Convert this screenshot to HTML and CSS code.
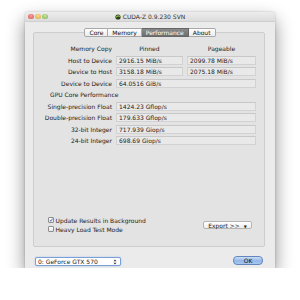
FILE: index.html
```html
<!DOCTYPE html>
<html lang="en">
<head>
    <meta charset="UTF-8">
    <title>CUDA-Z 0.9.230 SVN</title>
    <link rel="stylesheet" href="styles.css">
</head>
<body>
    <div class="window">
        <div class="titlebar">
            <div class="lights">
                <span class="light red"></span>
                <span class="light yellow"></span>
                <span class="light green"></span>
            </div>
            <div class="title">
                <svg class="app-icon" width="6" height="6" viewBox="0 0 6 6">
                    <circle cx="3" cy="3" r="2.6" fill="#2b3a1a"/>
                    <path d="M1.2 3.4 Q3 0.8 4.9 2.6" stroke="#8cc63f" stroke-width="1.1" fill="none"/>
                </svg>
                <span>CUDA-Z 0.9.230 SVN</span>
            </div>
        </div>

        <div class="content">
            <div class="tabs">
                <span class="tab first">Core</span>
                <span class="tab">Memory</span>
                <span class="tab active">Performance</span>
                <span class="tab last">About</span>
            </div>

            <div class="panel">
                <div class="results">
                    <span class="label">Memory Copy</span>
                    <span class="head">Pinned</span>
                    <span class="head">Pageable</span>

                    <span class="label">Host to Device</span>
                    <span class="value">2916.15 MiB/s</span>
                    <span class="value">2099.78 MiB/s</span>

                    <span class="label">Device to Host</span>
                    <span class="value">3158.18 MiB/s</span>
                    <span class="value">2075.18 MiB/s</span>

                    <span class="label">Device to Device</span>
                    <span class="value wide">64.0516 GiB/s</span>

                    <span class="section">GPU Core Performance</span>

                    <span class="label">Single-precision Float</span>
                    <span class="value wide">1424.23 Gflop/s</span>

                    <span class="label">Double-precision Float</span>
                    <span class="value wide">179.633 Gflop/s</span>

                    <span class="label">32-bit Integer</span>
                    <span class="value wide">717.939 Giop/s</span>

                    <span class="label">24-bit Integer</span>
                    <span class="value wide">698.69 Giop/s</span>
                </div>

                <div class="options">
                    <div class="checks">
                        <label class="check"><span class="box checked">&#10003;</span>Update Results in Background</label>
                        <label class="check"><span class="box"></span>Heavy Load Test Mode</label>
                    </div>
                    <button class="export">Export &gt;&gt; <span class="arrow">&#9660;</span></button>
                </div>
            </div>

            <div class="footer">
                <div class="device-select">
                    <span>0: GeForce GTX 570</span>
                    <svg width="4" height="6" viewBox="0 0 4 6">
                        <path d="M0.5 2.3 L2 0.6 L3.5 2.3 Z M0.5 3.7 L2 5.4 L3.5 3.7 Z" fill="#333"/>
                    </svg>
                </div>
                <button class="ok">OK</button>
            </div>
        </div>
    </div>
</body>
</html>
```

FILE: styles.css
```css
* {
    box-sizing: border-box;
    margin: 0;
    padding: 0;
}

body {
    background-color: #ffffff;
    font-family: 'DejaVu Sans', 'Liberation Sans', sans-serif;
    font-size: 6px;
    color: #222;
}

.window {
    margin: 12px 0 0 25px;
    width: 250px;
    height: 256px;
    display: flex;
    flex-direction: column;
    background-color: #ebebeb;
    border-radius: 3px 3px 0 0;
    box-shadow: 0 8px 18px rgba(0, 0, 0, 0.45), 0 0 2px rgba(0, 0, 0, 0.25);
}

.titlebar {
    height: 10px;
    display: flex;
    align-items: center;
    position: relative;
    background: linear-gradient(#ededed, #dcdcdc);
    border-radius: 3px 3px 0 0;
    border-bottom: 1px solid #cfcfcf;
}

.lights {
    display: flex;
    gap: 1.5px;
    padding-left: 3px;
}

.light {
    width: 5.5px;
    height: 5.5px;
    border-radius: 50%;
}

.red { background: radial-gradient(circle at 50% 35%, #f7a39e, #d9524b); }
.yellow { background: radial-gradient(circle at 50% 35%, #f6dc9a, #d9a83a); }
.green { background: radial-gradient(circle at 50% 35%, #c7e4a5, #7fb24f); }

.title {
    position: absolute;
    left: 0;
    right: 0;
    top: 1px;
    display: flex;
    justify-content: center;
    align-items: center;
    gap: 2px;
    color: #333;
    font-size: 6px;
    pointer-events: none;
}

.content {
    flex: 1;
    display: flex;
    flex-direction: column;
    padding: 6px 10px 0 8px;
}

.tabs {
    display: flex;
    justify-content: center;
    position: relative;
    z-index: 1;
    margin-left: 2px;
}

.tab {
    height: 9px;
    line-height: 8px;
    padding: 0 4px;
    background: linear-gradient(#ffffff, #ececec);
    border: 1px solid #a8a8a8;
    border-left: none;
    font-size: 6px;
    color: #111;
}

.tab.first {
    border-left: 1px solid #a8a8a8;
    border-radius: 2px 0 0 2px;
}

.tab.last {
    border-radius: 0 2px 2px 0;
}

.tab.active {
    background: linear-gradient(#8a8a8a, #6f6f6f);
    border-color: #666;
    color: #fff;
}

.panel {
    flex: 1;
    margin-top: -5px;
    display: flex;
    flex-direction: column;
    justify-content: space-between;
    background-color: #e3e3e3;
    border: 1px solid #cdcdcd;
    border-radius: 2px;
    padding: 11px 8px 13px 0;
}

.results {
    display: grid;
    grid-template-columns: 78px 67px 69px;
    grid-auto-rows: 9px;
    column-gap: 4px;
    row-gap: 2.5px;
    align-items: center;
}

.label {
    text-align: right;
    white-space: nowrap;
}

.head {
    text-align: center;
}

.section {
    grid-column: 1 / -1;
    padding-left: 16px;
}

.value {
    height: 9px;
    line-height: 8px;
    padding-left: 2px;
    background-color: #e9e9e9;
    border: 1px solid #d2d2d2;
    border-top-color: #c8c8c8;
    white-space: nowrap;
}

.value.wide {
    grid-column: 2 / 4;
}

.options {
    display: flex;
    justify-content: space-between;
    align-items: center;
    padding: 0 4px 0 14px;
}

.checks {
    display: flex;
    flex-direction: column;
    gap: 1px;
}

.check {
    display: flex;
    align-items: center;
    gap: 1.5px;
    height: 8px;
}

.box {
    width: 6px;
    height: 6px;
    border: 1px solid #8e8e8e;
    border-radius: 1px;
    background: linear-gradient(#ffffff, #e4e4e4);
    font-size: 6px;
    line-height: 4px;
    color: #1c3f8a;
    text-align: center;
    font-weight: bold;
}

.export {
    width: 49px;
    height: 8px;
    font-family: inherit;
    font-size: 6px;
    color: #222;
    background: linear-gradient(#ffffff, #ededed);
    border: 1px solid #b4b4b4;
    border-radius: 2px;
}

.export .arrow {
    font-size: 4px;
    margin-left: 2px;
}

.footer {
    height: 21px;
    display: flex;
    justify-content: space-between;
    align-items: flex-start;
    padding: 9px 2px 0 2px;
}

.device-select {
    width: 86px;
    height: 9px;
    margin-top: 1px;
    display: flex;
    justify-content: space-between;
    align-items: center;
    padding: 0 3px 0 2px;
    background-color: #fff;
    border: 1px solid #7a9fd6;
    border-radius: 2px;
    box-shadow: 0 0 1.5px #8fb2e8;
}

.ok {
    width: 30px;
    height: 9px;
    font-family: inherit;
    font-size: 6px;
    color: #111;
    background: linear-gradient(#cfe0f7, #91b6e8 55%, #a9c8f0);
    border: 1px solid #6286bd;
    border-radius: 4px;
}
```
